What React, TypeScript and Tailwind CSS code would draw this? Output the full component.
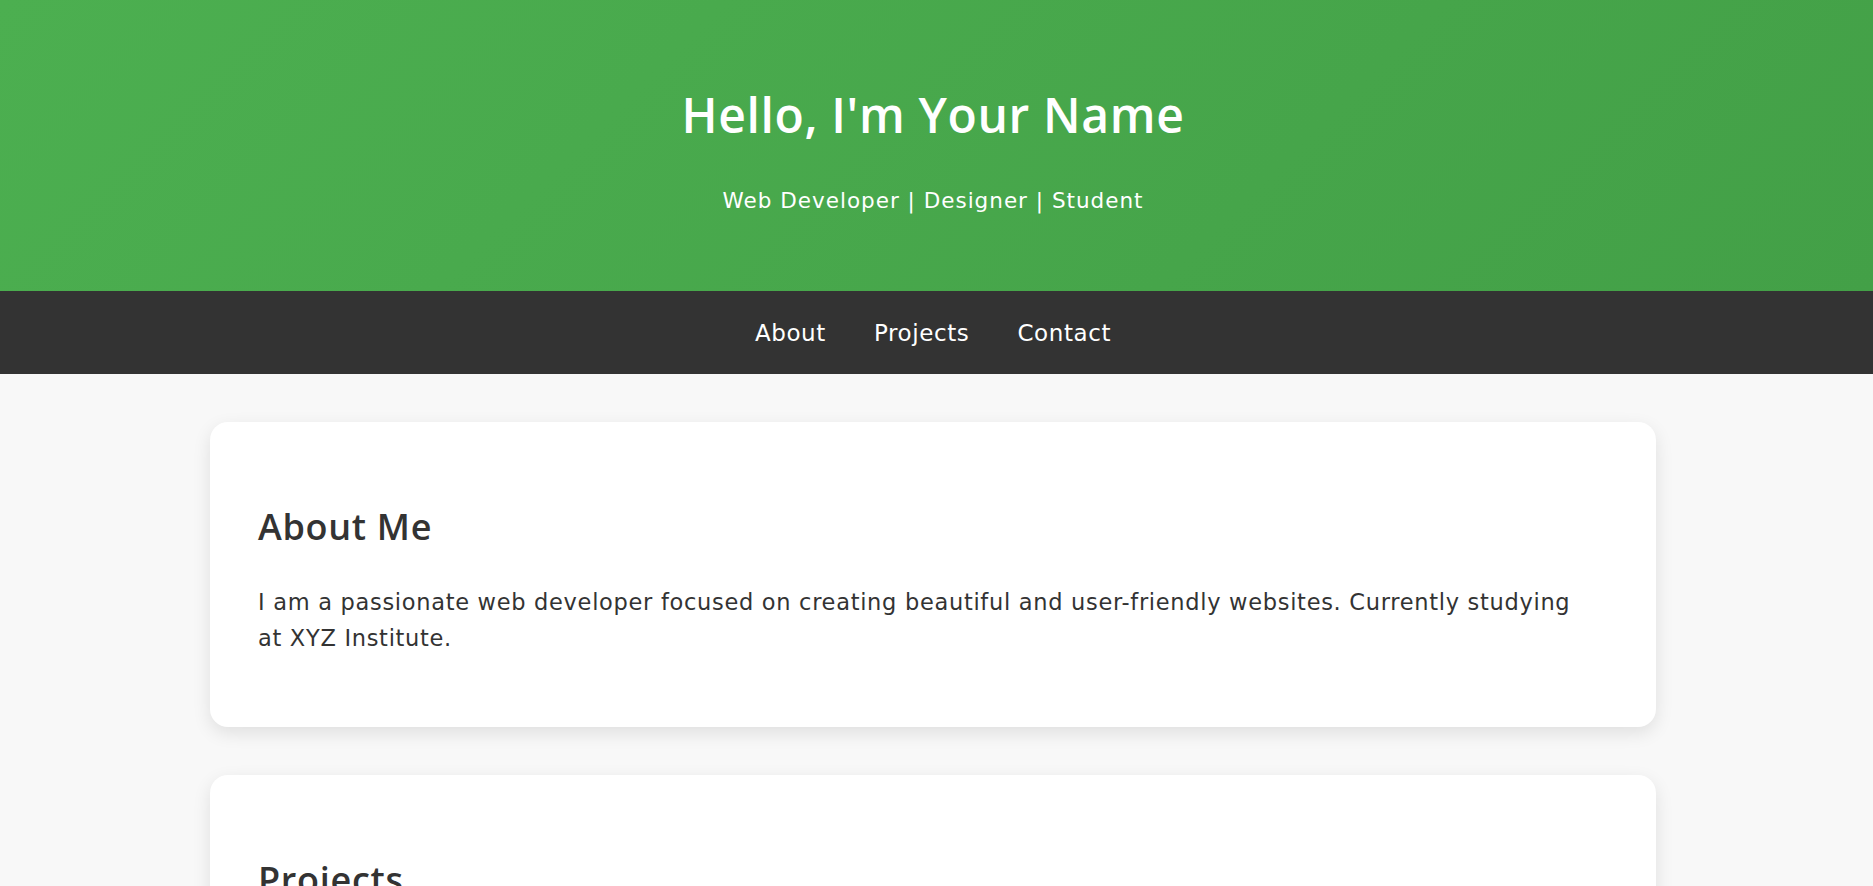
const bodyFont = { fontFamily: '"DejaVu Sans", "Open Sans", sans-serif' };
const headFont = { fontFamily: '"Open Sans", "Liberation Sans", sans-serif' };

function Card({ title, children }: { title: string; children: React.ReactNode }) {
  return (
    <section className="w-[1446px] rounded-[18px] bg-white px-[48px] pt-[48px] pb-[48px] text-[#333] shadow-[0_6px_18px_rgba(0,0,0,0.1)]">
      <h2 className="mt-[35px] text-[36px] font-semibold leading-[43px] tracking-[0.7px]" style={headFont}>
        {title}
      </h2>
      {children}
    </section>
  );
}

export default function App() {
  const links = ["About", "Projects", "Contact"];

  return (
    <div className="min-h-screen bg-[#f8f8f8]" style={bodyFont}>
      <header className="flex h-[291px] flex-col items-center bg-[linear-gradient(135deg,#4caf50,#43a047)] pr-[7px] text-white">
        <h1 className="mt-[86px] text-[48px] font-semibold leading-[58px] tracking-[0.65px]" style={headFont}>
          Hello, I'm Your Name
        </h1>
        <p className="mt-[43px] text-[21.5px] leading-[28px] tracking-[1px]">Web Developer | Designer | Student</p>
      </header>

      <nav className="flex h-[83px] items-center justify-center gap-[48px] bg-[#333] pr-[7px]">
        {links.map((l) => (
          <a key={l} href={`#${l.toLowerCase()}`} className="text-[23px] leading-[28px] tracking-[0.6px] text-white">
            {l}
          </a>
        ))}
      </nav>

      <main className="flex flex-col items-center gap-[48px] py-[48px] pr-[7px]">
        <Card title="About Me">
          <p className="mt-[36px] mb-[23px] max-w-[1324px] text-[22.5px] leading-[36px] tracking-[0.7px]">
            I am a passionate web developer focused on creating beautiful and user-friendly websites. Currently studying
            at XYZ Institute.
          </p>
        </Card>
        <Card title="Projects">
          <ul className="mt-[36px] mb-[23px] list-disc pl-[28px] text-[22.5px] leading-[36px] tracking-[0.7px]">
            <li>Portfolio Website</li>
            <li>Weather App</li>
            <li>To-Do List</li>
          </ul>
        </Card>
        <Card title="Contact">
          <p className="mt-[36px] mb-[23px] text-[22.5px] leading-[36px] tracking-[0.7px]">Email: yourname@example.com</p>
        </Card>
      </main>
    </div>
  );
}
